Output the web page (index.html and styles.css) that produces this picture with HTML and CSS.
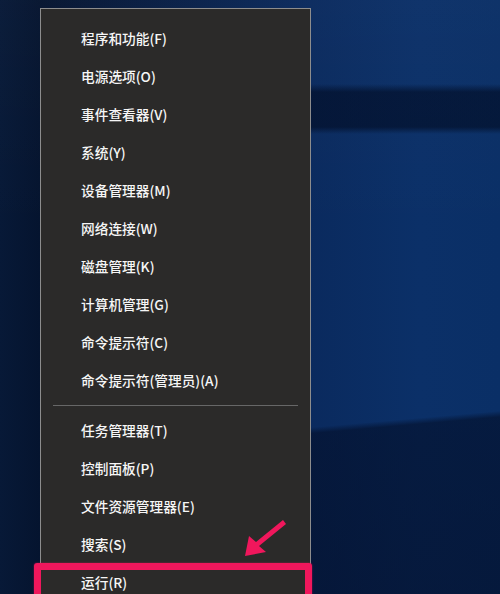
FILE: index.html
```html
<!DOCTYPE html>
<html lang="zh-CN">
<head>
<meta charset="utf-8">
<title>Win+X 菜单</title>
<link rel="stylesheet" href="styles.css">
</head>
<body>
<div class="desktop">
  <div class="menu">
    <ul class="group">
      <li>程序和功能(F)</li>
      <li>电源选项(O)</li>
      <li>事件查看器(V)</li>
      <li>系统(Y)</li>
      <li>设备管理器(M)</li>
      <li>网络连接(W)</li>
      <li>磁盘管理(K)</li>
      <li>计算机管理(G)</li>
      <li>命令提示符(C)</li>
      <li>命令提示符(管理员)(A)</li>
    </ul>
    <div class="sep"></div>
    <ul class="group">
      <li>任务管理器(T)</li>
      <li>控制面板(P)</li>
      <li>文件资源管理器(E)</li>
      <li>搜索(S)</li>
      <li>运行(R)</li>
    </ul>
  </div>
  <div class="highlight"></div>
  <svg class="arrow" width="500" height="594" viewBox="0 0 500 594">
    <polygon points="245,556 249,536 256,542 283,520 286,524 259,546 266,552" fill="#f0175c"/>
  </svg>
</div>
</body>
</html>
```
FILE: styles.css
```css
html, body {
  margin: 0;
  padding: 0;
  width: 500px;
  height: 594px;
  overflow: hidden;
}

.desktop {
  position: relative;
  width: 500px;
  height: 594px;
  overflow: hidden;
  background:
    linear-gradient(175deg, rgba(0,0,0,0) 0, rgba(0,0,0,0) 70%, rgba(2,10,32,0.55) 71%, rgba(2,10,32,0.6) 100%) right top / 190px 594px no-repeat,
    linear-gradient(to bottom, rgba(0,0,0,0) 84px, rgba(1,12,36,0.65) 92px, rgba(1,12,36,0.65) 127px, rgba(0,0,0,0) 134px) right top / 190px 594px no-repeat,
    linear-gradient(to bottom, rgba(255,255,255,0.02) 0, rgba(0,0,0,0) 40%),
    linear-gradient(to right, #071937 0, #05142f 40px, #0a2a5e 310px, #0b3068 420px, #0a2f66 100%);
  font-family: "Noto Sans CJK SC", "Noto Sans", sans-serif;
}

.menu {
  margin-left: 40px;
  margin-top: 8px;
  width: 271px;
  height: 620px;
  box-sizing: border-box;
  background: #2b2a29;
  border: 1px solid #8d8d8d;
  border-bottom: none;
  padding-top: 10px;
}

.group {
  list-style: none;
  margin: 0;
  padding: 0;
}

.group li {
  height: 38px;
  line-height: 38px;
  padding-left: 40px;
  font-size: 13.7px;
  font-weight: 500;
  color: #f6f6f6;
  white-space: nowrap;
}

.sep {
  height: 1px;
  margin: 6px 12px 5px;
  background: #676767;
}

.highlight {
  position: absolute;
  left: 34px;
  top: 563px;
  width: 278px;
  height: 60px;
  box-sizing: border-box;
  border: 7px solid #f0175c;
  border-radius: 3px;
  box-shadow: 0 0 2px rgba(240,23,92,0.6);
}

.arrow {
  position: absolute;
  left: 0;
  top: 0;
}
```
